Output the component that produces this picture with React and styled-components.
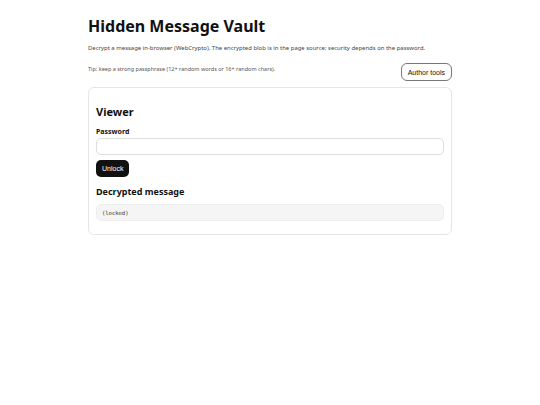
import React from 'react';
import styled, { createGlobalStyle } from 'styled-components';

const GlobalStyle = createGlobalStyle`
  html, body {
    margin: 0;
    padding: 0;
    background: #ffffff;
  }
  body {
    font-family: "Noto Sans", "Open Sans", sans-serif;
    color: #111111;
  }
`;

const Page = styled.div`
  width: 364px;
  margin: 0 auto;
  padding-top: 16px;
  display: flex;
  flex-direction: column;
`;

const Title = styled.h1`
  margin: 0;
  font-size: 16px;
  line-height: 20px;
  font-weight: 700;
  color: #111;
`;

const Lead = styled.p`
  margin: 7px 0 0;
  font-size: 5.95px;
  line-height: 10px;
  color: #444;
`;

const TipRow = styled.div`
  margin-top: 9px;
  display: flex;
  justify-content: space-between;
  align-items: center;
`;

const Tip = styled.span`
  font-size: 5.5px;
  line-height: 8px;
  color: #555;
  margin-top: -5px;
`;

const OutlineButton = styled.button`
  margin-top: 1px;
  height: 18px;
  padding: 0 6px;
  border: 1px solid #777;
  border-radius: 6px;
  background: #fff;
  color: #111;
  font-family: "Liberation Sans", Arial, sans-serif;
  font-size: 7px;
`;

const Card = styled.section`
  margin-top: 6px;
  border: 1px solid #e6e6e6;
  border-radius: 6px;
  padding: 16px 7px 13px;
  display: flex;
  flex-direction: column;
`;

const CardTitle = styled.h2`
  margin: 0;
  font-size: 11px;
  line-height: 16px;
  font-weight: 700;
`;

const Label = styled.label`
  margin-top: 7px;
  font-size: 7px;
  line-height: 10px;
  font-weight: 700;
`;

const Input = styled.input`
  margin-top: 1px;
  box-sizing: border-box;
  width: 100%;
  height: 17px;
  border: 1px solid #dcdcdc;
  border-radius: 5px;
  background: #fff;
  padding: 0 4px;
  font-size: 7px;
  outline: none;
`;

const SolidButton = styled.button`
  margin-top: 5px;
  align-self: flex-start;
  height: 17px;
  padding: 0 6px;
  border: none;
  border-radius: 5px;
  background: #111111;
  color: #fff;
  font-family: "Liberation Sans", Arial, sans-serif;
  font-size: 7px;
`;

const SubTitle = styled.h3`
  margin: 8px 0 0;
  font-size: 9px;
  line-height: 14px;
  font-weight: 700;
`;

const Output = styled.pre`
  margin: 5px 0 0;
  height: 17px;
  box-sizing: border-box;
  border: 1px solid #eeeeee;
  border-radius: 5px;
  background: #f5f5f5;
  padding: 0 5px;
  display: flex;
  align-items: center;
  font-family: "DejaVu Sans Mono", "Liberation Mono", monospace;
  font-size: 5.5px;
  color: #333;
`;

export default function App() {
  return (
    <>
      <GlobalStyle />
      <Page>
        <Title>Hidden Message Vault</Title>
        <Lead>
          Decrypt a message in-browser (WebCrypto). The encrypted blob is in the page source; security depends on the password.
        </Lead>
        <TipRow>
          <Tip>Tip: keep a strong passphrase (12+ random words or 16+ random chars).</Tip>
          <OutlineButton>Author tools</OutlineButton>
        </TipRow>
        <Card>
          <CardTitle>Viewer</CardTitle>
          <Label htmlFor="pw">Password</Label>
          <Input id="pw" type="password" />
          <SolidButton>Unlock</SolidButton>
          <SubTitle>Decrypted message</SubTitle>
          <Output>(locked)</Output>
        </Card>
      </Page>
    </>
  );
}
